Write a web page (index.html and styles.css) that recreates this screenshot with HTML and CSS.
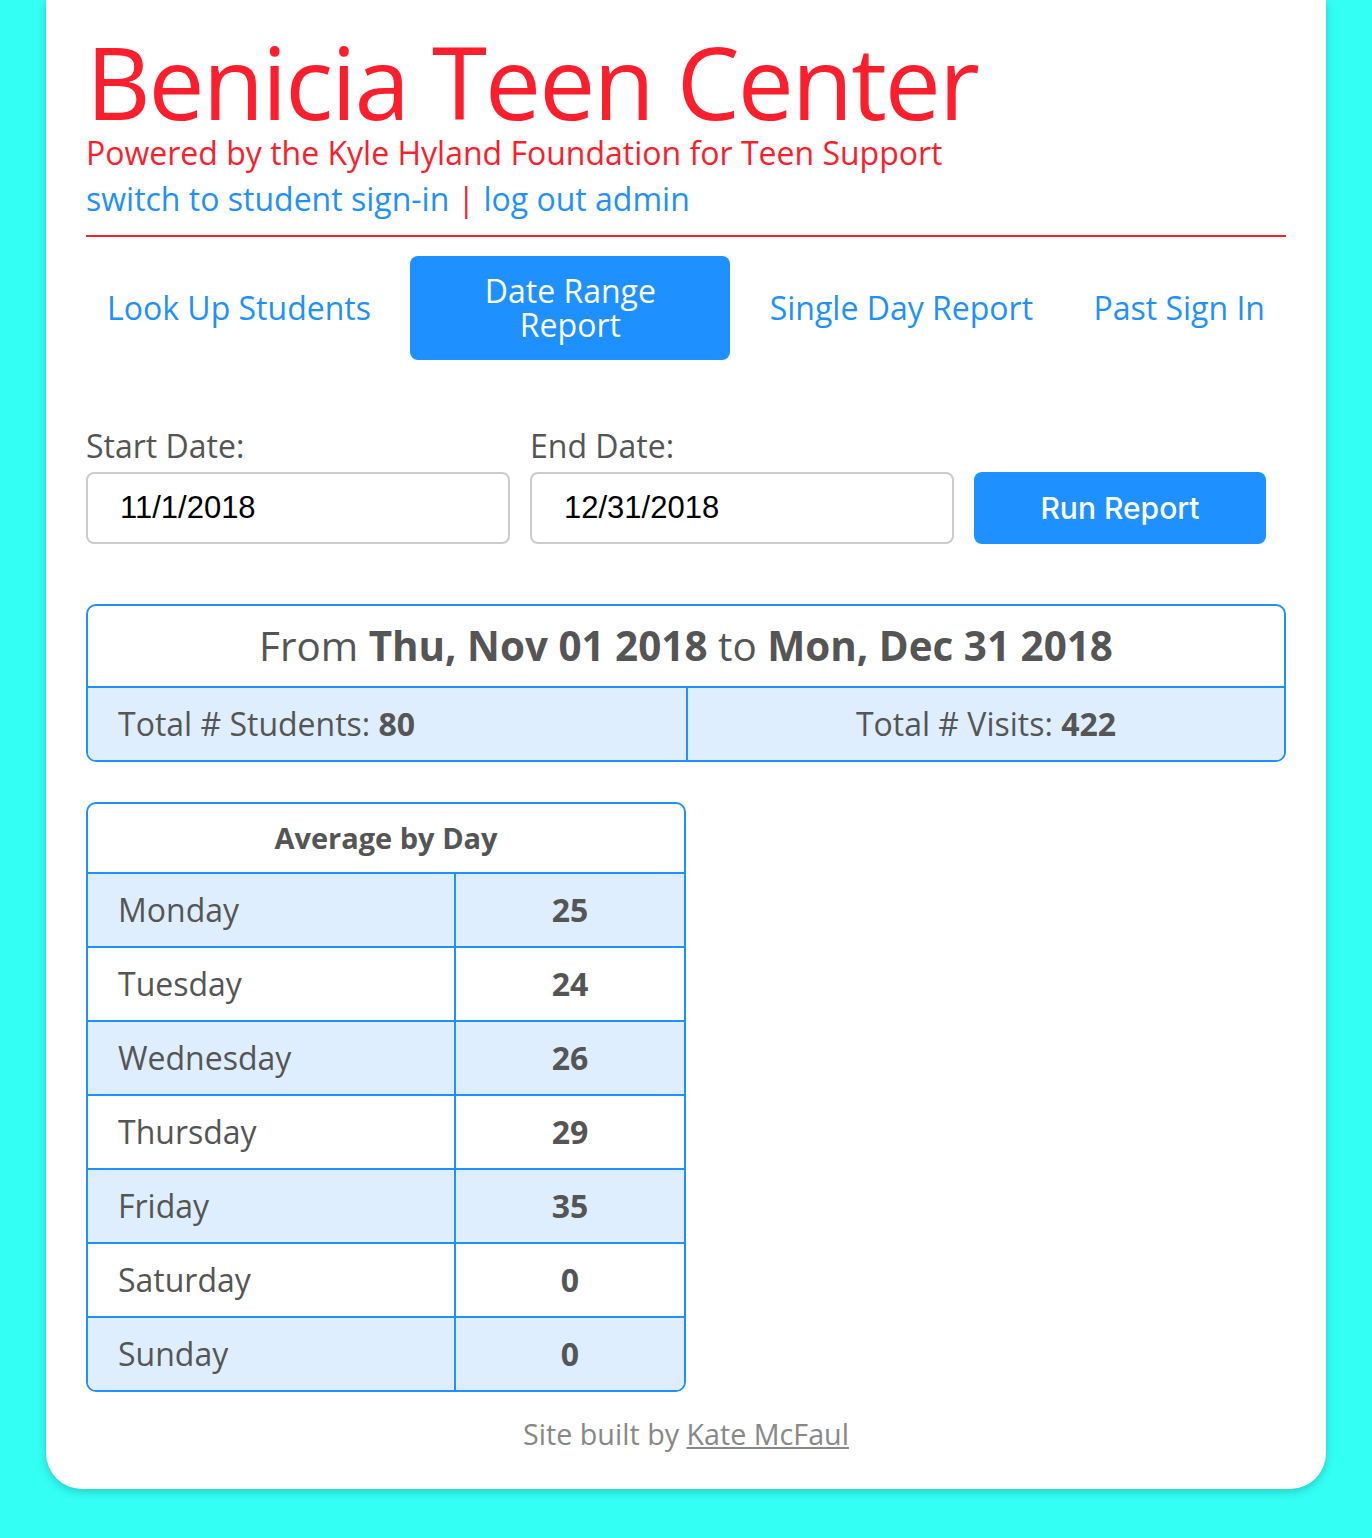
FILE: index.html
```html
<!DOCTYPE html>
<html>
<head>
<meta charset="utf-8">
<link rel="stylesheet" href="styles.css">
</head>
<body>
<div class="card">
  <header class="header">
    <h1 class="title">Benicia Teen Center</h1>
    <div class="subtitle">Powered by the Kyle Hyland Foundation for Teen Support</div>
    <div class="links"><a class="link">switch to student sign-in</a> <span class="pipe">|</span> <a class="link">log out admin</a></div>
  </header>
  <nav class="nav">
    <a class="nav-item">Look Up Students</a>
    <a class="nav-item active">Date Range<br>Report</a>
    <a class="nav-item">Single Day Report</a>
    <a class="nav-item">Past Sign In</a>
  </nav>
  <form class="range-form">
    <div class="field">
      <label class="label">Start Date:</label>
      <input class="input" type="text" value="11/1/2018">
    </div>
    <div class="field">
      <label class="label">End Date:</label>
      <input class="input" type="text" value="12/31/2018">
    </div>
    <div class="field">
      <button class="run" type="button">Run Report</button>
    </div>
  </form>
  <section class="summary">
    <div class="summary-head">From <b>Thu, Nov 01 2018</b> to <b>Mon, Dec 31 2018</b></div>
    <div class="summary-row">
      <div class="summary-cell left">Total # Students: <b>80</b></div>
      <div class="summary-cell center">Total # Visits: <b>422</b></div>
    </div>
  </section>
  <section class="avg">
    <div class="avg-head">Average by Day</div>
    <div class="avg-row shade"><div class="day">Monday</div><div class="val">25</div></div>
    <div class="avg-row"><div class="day">Tuesday</div><div class="val">24</div></div>
    <div class="avg-row shade"><div class="day">Wednesday</div><div class="val">26</div></div>
    <div class="avg-row"><div class="day">Thursday</div><div class="val">29</div></div>
    <div class="avg-row shade"><div class="day">Friday</div><div class="val">35</div></div>
    <div class="avg-row"><div class="day">Saturday</div><div class="val">0</div></div>
    <div class="avg-row shade last"><div class="day">Sunday</div><div class="val">0</div></div>
  </section>
  <footer class="footer">Site built by <a class="credit">Kate McFaul</a></footer>
</div>
</body>
</html>
```
FILE: styles.css
```css
* { box-sizing: border-box; }
html, body { margin: 0; padding: 0; }
body {
  background: #33fff5;
  font-family: "Open Sans", sans-serif;
  color: #555;
  height: 1538px;
}
.card {
  width: 1280px;
  margin: 0 46px;
  background: #fff;
  border-radius: 0 0 36px 36px;
  box-shadow: 0 3px 8px rgba(0, 60, 60, 0.25);
  padding: 31px 40px 35px;
}
.header {
  border-bottom: 2px solid #fb1e2c;
  padding-bottom: 12px;
}
.title {
  margin: 0;
  font-weight: 400;
  font-size: 100px;
  line-height: 100px;
  color: #fb1e2c;
  letter-spacing: -2px;
}
.subtitle {
  font-size: 32px;
  line-height: 44px;
  color: #fb1e2c;
  margin-top: 0;
}
.links {
  font-size: 32px;
  line-height: 48px;
  color: #1e90ff;
}
.link { color: #1e90ff; }
.pipe { color: #fb1e2c; }
.nav {
  display: flex;
  justify-content: space-between;
  align-items: center;
  margin-top: 19px;
}
.nav-item {
  color: #1e90ff;
  font-size: 32px;
  padding: 0 21px;
  line-height: 104px;
}
.nav-item.active {
  width: 320px;
  height: 104px;
  background: #1e90ff;
  color: #fff;
  border-radius: 8px;
  line-height: 34px;
  text-align: center;
  padding: 18px 10px 0;
}
.range-form {
  display: grid;
  grid-template-columns: 424px 424px 292px;
  column-gap: 20px;
  margin-top: 66px;
  align-items: end;
}
.field { display: flex; flex-direction: column; }
.label {
  font-size: 32px;
  line-height: 40px;
  color: #555;
  margin-bottom: 6px;
}
.input {
  height: 72px;
  border: 2px solid #ccc;
  border-radius: 8px;
  font-family: "Liberation Sans", Arial, sans-serif;
  font-size: 31px;
  color: #000;
  padding: 0 0 0 32px;
  outline: none;
}
.run {
  height: 72px;
  border: none;
  border-radius: 8px;
  background: #1e90ff;
  color: #fff;
  font-family: Inter, "Liberation Sans", sans-serif;
  font-size: 30px;
  font-weight: 500;
}
.summary {
  margin-top: 60px;
  border: 2px solid #1e90ff;
  border-radius: 10px;
  overflow: hidden;
}
.summary-head {
  text-align: center;
  font-size: 40.4px;
  line-height: 80px;
  border-bottom: 2px solid #1e90ff;
}
.summary-head b, .summary-cell b, .val, .avg-head { font-weight: 700; }
.summary-row {
  display: grid;
  grid-template-columns: 1fr 1fr;
  background: #dfeeff;
}
.summary-cell {
  font-size: 32px;
  line-height: 72px;
}
.summary-cell.left { padding-left: 30px; }
.summary-cell.center { text-align: center; border-left: 2px solid #1e90ff; }
.avg {
  margin-top: 40px;
  width: 600px;
  border: 2px solid #1e90ff;
  border-radius: 10px;
  overflow: hidden;
}
.avg-head {
  text-align: center;
  font-size: 29px;
  line-height: 68px;
  border-bottom: 2px solid #1e90ff;
}
.avg-row {
  display: grid;
  grid-template-columns: 368px 1fr;
  border-bottom: 2px solid #1e90ff;
}
.avg-row.last { border-bottom: none; }
.avg-row.shade { background: #dfeeff; }
.day {
  font-size: 32px;
  line-height: 72px;
  padding-left: 30px;
  border-right: 2px solid #1e90ff;
}
.val {
  font-size: 32px;
  line-height: 72px;
  text-align: center;
}
.footer {
  text-align: center;
  margin-top: 22px;
  font-size: 28.7px;
  line-height: 40px;
  color: #888;
}
.credit { color: #888; text-decoration: underline; }
```
